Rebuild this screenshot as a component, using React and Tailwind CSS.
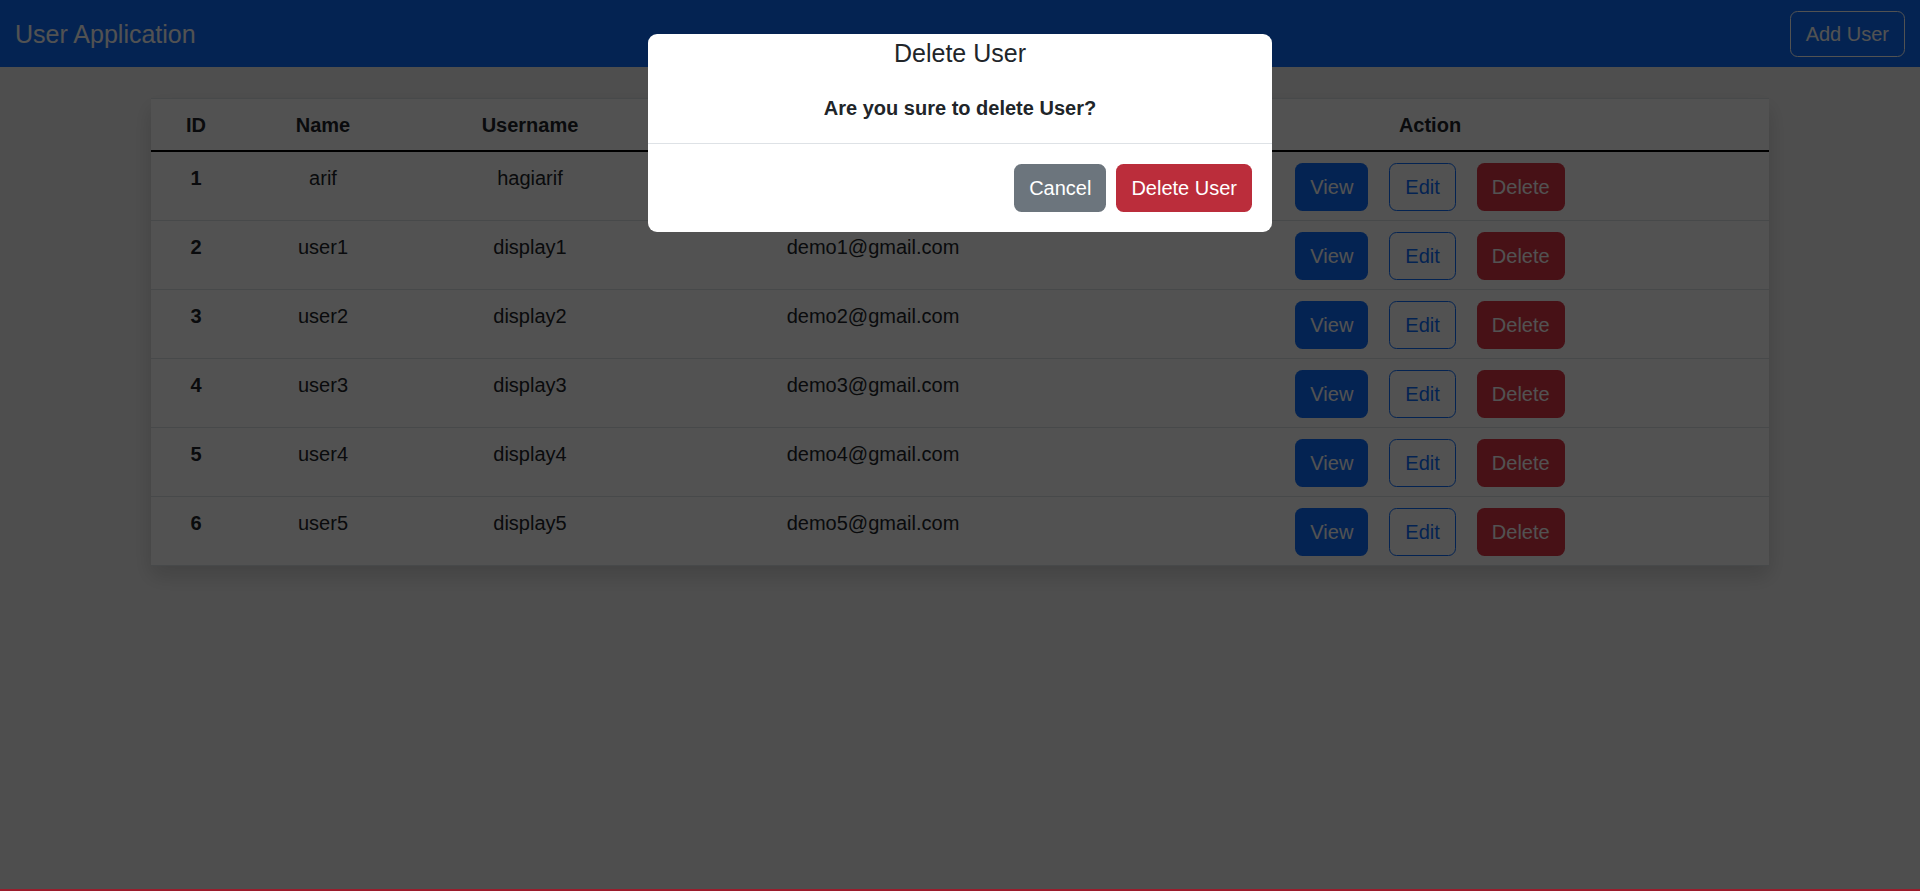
import React from "react";

const users = [
  { id: 1, name: "arif", username: "hagiarif", email: "" },
  { id: 2, name: "user1", username: "display1", email: "demo1@gmail.com" },
  { id: 3, name: "user2", username: "display2", email: "demo2@gmail.com" },
  { id: 4, name: "user3", username: "display3", email: "demo3@gmail.com" },
  { id: 5, name: "user4", username: "display4", email: "demo4@gmail.com" },
  { id: 6, name: "user5", username: "display5", email: "demo5@gmail.com" },
];

const FONT = { fontFamily: '"Liberation Sans", Arial, sans-serif' };

export default function App() {
  return (
    <div className="relative min-h-[891px] overflow-hidden bg-[#f3f3f3] text-[#212529]" style={FONT}>
      <header className="flex h-[67px] items-center justify-between bg-[#0d6efd] px-[15px]">
        <span className="pt-[2px] text-[25px] leading-[1.5] text-white">User Application</span>
        <button className="h-[46px] rounded-[7.5px] border border-white px-[15px] text-[20px] leading-[1.5] text-white">Add User</button>
      </header>

      <main className="mx-auto mt-[31px] w-[1618px] bg-white shadow-[0_10px_20px_rgba(0,0,0,0.15)]">
        <div className="grid grid-cols-[90px_164px_250px_436px_678px] border-t border-[#dee2e6] border-b-[2.5px] border-b-black text-center text-[20px] font-bold leading-[30px]">
          <div className="pb-[10px] pt-[11px]">ID</div>
          <div className="pb-[10px] pt-[11px]">Name</div>
          <div className="pb-[10px] pt-[11px]">Username</div>
          <div className="pb-[10px] pt-[11px]">Email</div>
          <div className="pb-[10px] pt-[11px]">Action</div>
        </div>
        {users.map((u) => (
          <div key={u.id} className="grid h-[69px] grid-cols-[90px_164px_250px_436px_678px] border-b border-[#dee2e6] text-center text-[20px] leading-[30px]">
            <div className="pt-[11px] font-bold">{u.id}</div>
            <div className="pt-[11px]">{u.name}</div>
            <div className="pt-[11px]">{u.username}</div>
            <div className="pt-[11px]">{u.email}</div>
            <div className="flex justify-center gap-[21px] pt-[11px]">
              <button className="h-[48px] rounded-[7.5px] bg-[#0d6efd] px-[15px] text-white">View</button>
              <button className="h-[48px] rounded-[7.5px] border border-[#0d6efd] px-[15px] text-[#0d6efd]">Edit</button>
              <button className="h-[48px] rounded-[7.5px] bg-[#dc3545] px-[15px] text-white">Delete</button>
            </div>
          </div>
        ))}
      </main>

      <div className="absolute inset-0 bg-black/[0.68]" />

      <div className="absolute left-[648px] top-[34px] w-[624px] rounded-[9px] bg-white text-[#212529]">
        <h5 className="pt-px text-center text-[25px] leading-[37.5px]">Delete User</h5>
        <div className="p-[20px] text-center text-[20px] font-bold leading-[30px]">Are you sure to delete User?</div>
        <div className="flex justify-end gap-[10px] border-t border-[#dee2e6] p-[20px]">
          <button className="h-[48px] rounded-[7.5px] bg-[#6c757d] px-[15px] text-[20px] text-white">Cancel</button>
          <button className="h-[48px] rounded-[7.5px] bg-[#bb2d3b] px-[15px] text-[20px] text-white">Delete User</button>
        </div>
      </div>

      <div className="absolute bottom-0 left-0 right-0 h-[2px] bg-[#9b1c2c]" />
    </div>
  );
}
